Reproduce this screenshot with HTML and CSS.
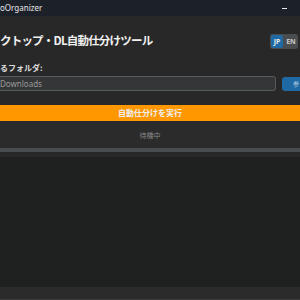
FILE: index.html
```html
<!DOCTYPE html>
<html lang="ja">
<head>
<meta charset="utf-8">
<link rel="stylesheet" href="styles.css">
</head>
<body>
<div class="window">
  <div class="titlebar">
    <span class="app-name">oOrganizer</span>
    <span class="min-btn"></span>
  </div>
  <div class="main">
    <div class="header">
      <h1 class="title">クトップ・DL自動仕分けツール</h1>
      <div class="lang">
        <span class="lang-btn active">JP</span>
        <span class="lang-btn">EN</span>
      </div>
    </div>
    <div class="folder">
      <div class="folder-label">るフォルダ:</div>
      <div class="folder-row">
        <div class="entry">Downloads</div>
        <div class="browse">参</div>
      </div>
    </div>
    <div class="run">自動仕分けを実行</div>
    <div class="status">待機中</div>
    <div class="progress"></div>
    <div class="log"></div>
    <div class="footer"></div>
  </div>
</div>
</body>
</html>
```
FILE: styles.css
```css
* { box-sizing: border-box; }
html, body { margin: 0; padding: 0; background: #242424; }
body {
  width: 300px;
  height: 300px;
  overflow: hidden;
  font-family: "Noto Sans CJK JP", "Noto Sans", sans-serif;
  color: #dce4ee;
}
.window { display: flex; flex-direction: column; height: 300px; }
.titlebar {
  height: 16px;
  background: #1c2028;
  display: flex;
  align-items: center;
  justify-content: space-between;
  padding: 0 13px 0 0;
}
.app-name { font-size: 8px; color: #e8e8e8; font-family: "Noto Sans", sans-serif; line-height: 1; margin-top: -1px; }
.min-btn { width: 5px; height: 1px; background: #e8e8e8; }
.main { flex: 1; display: flex; flex-direction: column; background: #282828; }
.header {
  height: 44px;
  display: flex;
  align-items: center;
  justify-content: space-between;
  padding: 6px 2px 0 0;
}
.title { margin: 0; font-size: 11.5px; font-weight: 700; color: #f0f0f0; letter-spacing: -0.8px; line-height: 1; }
.lang {
  display: flex;
  gap: 2px;
  padding: 1px;
  background: #4a4d50;
  border-radius: 3px;
  height: 15px;
}
.lang-btn {
  width: 12px;
  font-size: 7px;
  font-weight: 700;
  font-family: "Noto Sans", sans-serif;
  display: flex;
  align-items: center;
  justify-content: center;
  color: #c8c8c8;
  border-radius: 2px;
}
.lang-btn.active { background: #1f6aa5; color: #e8e8e8; }
.folder { padding: 1px 0 0 0; }
.folder-label { font-size: 8px; font-weight: 700; color: #dcdcdc; line-height: 10px; height: 14px; padding-top: 2px; }
.folder-row { display: flex; gap: 6px; margin-top: 1px; }
.entry {
  flex: 1;
  height: 15px;
  background: #343638;
  border: 1px solid #565b5e;
  border-left: none;
  border-radius: 0 3px 3px 0;
  font-size: 8px;
  color: #9a9a9a;
  font-family: "Noto Sans", sans-serif;
  line-height: 13px;
}
.browse {
  width: 18px;
  height: 14px;
  margin-top: 1px;
  background: #1f6aa5;
  border-radius: 3px 0 0 3px;
  font-size: 6px;
  color: #b8cde0;
  line-height: 14px;
  padding-left: 11px;
  overflow: hidden;
  white-space: nowrap;
}
.run {
  margin-top: 14px;
  height: 16px;
  background: #ff9800;
  color: #eeeeee;
  font-size: 8px;
  font-weight: 700;
  text-align: center;
  line-height: 16px;
}
.status {
  height: 27px;
  background: #2b2b2b;
  color: #8a8a8a;
  font-size: 7px;
  text-align: center;
  line-height: 28px;
}
.progress { height: 4px; background: #4a4d50; }
.log { margin-top: 5px; height: 130px; background: #1f2020; }
.footer { flex: 1; background: #2b2b2b; border-bottom: 1px solid #3d3d3d; }
```
